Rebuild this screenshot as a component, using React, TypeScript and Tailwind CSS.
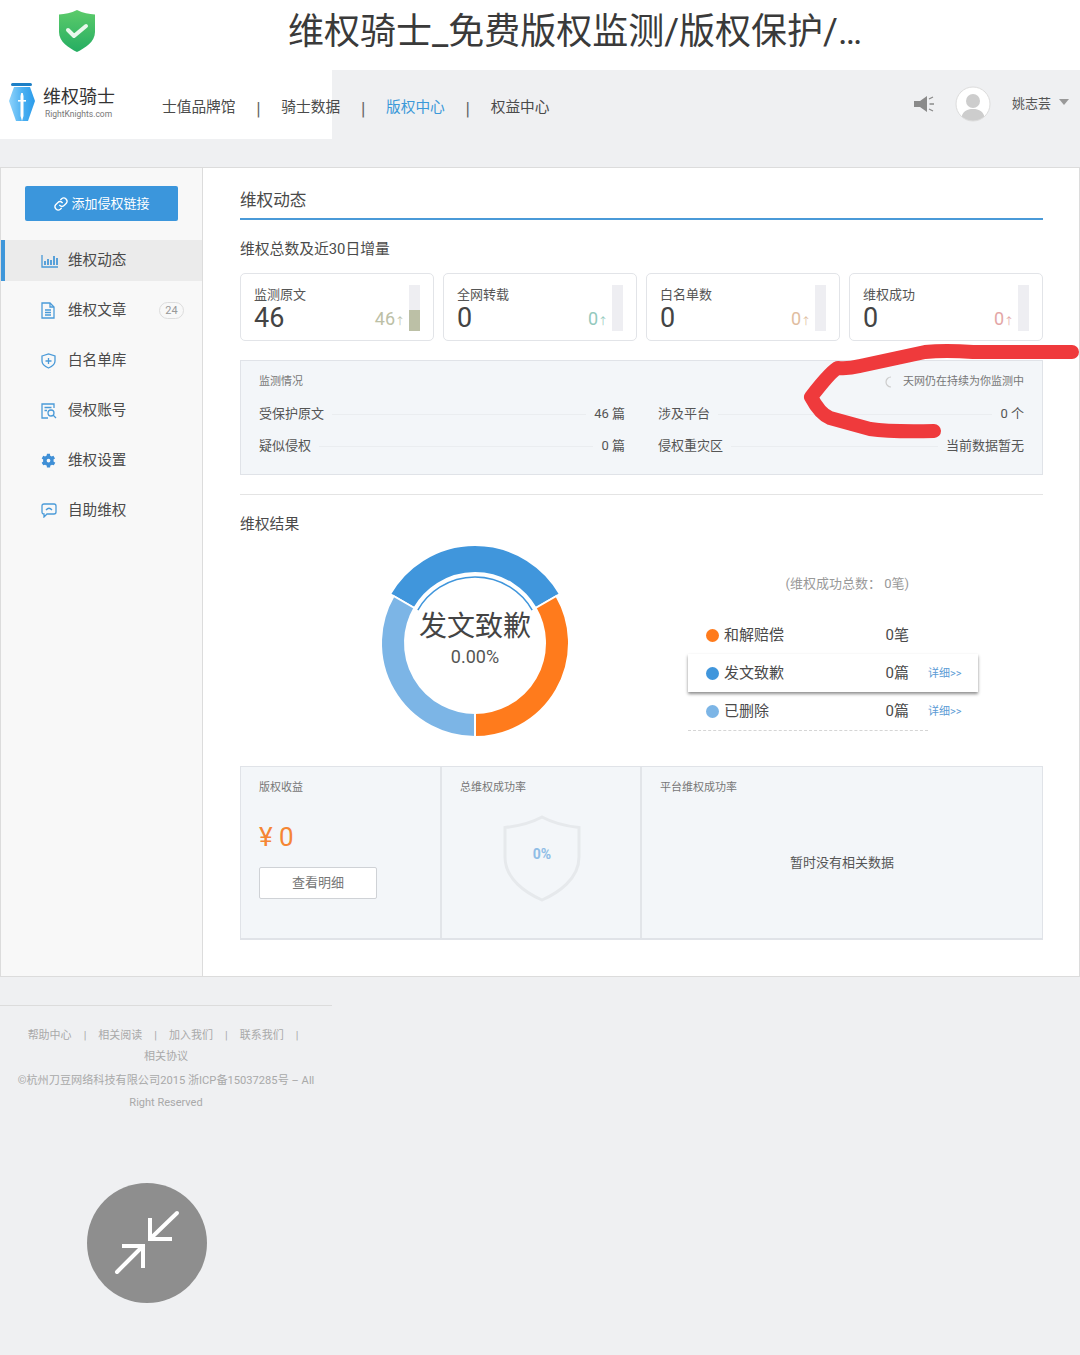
import React from "react";

const FONT = "font-['Roboto','Noto_Sans_CJK_SC',sans-serif]";

const NavSep = () => <span className="mx-[20.75px] mt-[3px] text-[18px] leading-[20px] text-[#666]">|</span>;

function Logo() {
  return (
    <svg width="28" height="40" viewBox="0 0 28 40" className="shrink-0">
      <defs>
        <linearGradient id="nib" x1="0" y1="0" x2="1" y2="0">
          <stop offset="0" stopColor="#8fd3fb" />
          <stop offset="0.5" stopColor="#4db1f2" />
          <stop offset="1" stopColor="#2a9bea" />
        </linearGradient>
      </defs>
      <rect x="3" y="0" width="21" height="3" rx="1.5" fill="#1c7fc6" />
      <path d="M6 4 H22 L27 18 L20 38 H8 L1 18 Z" fill="url(#nib)" />
      <path d="M13.2 10 h1.6 l.7 3 v20 l-1.5 5 l-1.5 -5 V13 Z" fill="#fff" />
      <rect x="10" y="17" width="8" height="1.6" fill="#fff" />
    </svg>
  );
}

function Card({ title, value, delta, color, fill }: { title: string; value: string; delta: string; color: string; fill?: number }) {
  return (
    <div className="relative flex-1 h-[68px] rounded-[5px] border border-[#e2e4e8] bg-white pl-[13px] pt-[12px]">
      <div className="text-[13px] leading-[17px] text-[#555]">{title}</div>
      <div className="text-[27px] leading-[30px] text-[#444]">{value}</div>
      <div className="absolute right-[13px] top-[11px] w-[11px] h-[46px] bg-[#eeeef2] flex flex-col justify-end">
        {fill ? <div className="w-full" style={{ height: fill, backgroundColor: color }} /> : null}
      </div>
      <div className="absolute right-[28px] bottom-[7px] text-[18px] leading-[22px]" style={{ color }}>
        {delta}
        <span className="text-[10px]">↑</span>
      </div>
    </div>
  );
}

function InfoRow({ label, value }: { label: string; value: string }) {
  return (
    <div className="flex items-center h-[32px] text-[13px] text-[#555]">
      <span>{label}</span>
      <span className="flex-1 mx-[8px] h-px bg-[#eaedf0]" />
      <span>{value}</span>
    </div>
  );
}

function SideItem({ icon, label, active, badge }: { icon: React.ReactNode; label: string; active?: boolean; badge?: string }) {
  return (
    <div className={`relative flex items-center h-[41px] pl-[40px] text-[14.6px] text-[#4a4a4a] ${active ? "bg-[#ebebeb] border-l-[4px] border-[#3f97da] !pl-[36px]" : ""}`}>
      <span className="w-[18px] h-[18px] mr-[9px] flex items-center justify-start">{icon}</span>
      <span>{label}</span>
      {badge ? (
        <span className="absolute left-[158px] top-[12px] w-[25px] h-[17px] rounded-full border border-[#ddd] text-[11px] leading-[15px] text-center text-[#999]">
          {badge}
        </span>
      ) : null}
    </div>
  );
}

const stroke = { fill: "none", stroke: "#4a9ad8", strokeWidth: 1.3 };

function IconChart() {
  return (
    <svg width="18" height="14" viewBox="0 0 18 14">
      <path d="M1 1 V13 H17" {...stroke} />
      <path d="M4 11 V7 M7 11 V5 M10 11 V6 M13 11 V2 M16 11 V4" fill="none" stroke="#4a9ad8" strokeWidth="1.8" />
    </svg>
  );
}
function IconDoc() {
  return (
    <svg width="14" height="17" viewBox="0 0 14 17">
      <path d="M1 1 H9 L13 5 V16 H1 Z" {...stroke} />
      <path d="M9 1 V5 H13 M4 8 H10 M4 10.5 H10 M4 13 H10" {...stroke} />
    </svg>
  );
}
function IconShield() {
  return (
    <svg width="15" height="16" viewBox="0 0 15 16">
      <path d="M1 3 L7.5 1 L14 3 V8 C14 12 10 14 7.5 15 C5 14 1 12 1 8 Z" {...stroke} />
      <path d="M7.5 5 V11 M4.5 8 H10.5" {...stroke} />
    </svg>
  );
}
function IconAccount() {
  return (
    <svg width="16" height="16" viewBox="0 0 16 16">
      <path d="M13 5 V1 H1 V15 H7" {...stroke} />
      <path d="M3.5 4.5 H10.5 M3.5 7.5 H6" {...stroke} />
      <circle cx="10" cy="10" r="3" {...stroke} />
      <path d="M12 12 L15 15" {...stroke} />
    </svg>
  );
}
function IconGear() {
  return (
    <svg width="15" height="15" viewBox="0 0 24 24">
      <path
        fill="#3f8fd6"
        d="M20 13.5a8 8 0 0 0 0-3l2.4-1.9-2.5-4.3-2.9 1.1a8 8 0 0 0-2.6-1.5L14.5 1h-5l-.4 2.9a8 8 0 0 0-2.6 1.5L3.6 4.3 1.1 8.6 3.5 10.5a8 8 0 0 0 0 3L1.1 15.4l2.5 4.3 2.9-1.1a8 8 0 0 0 2.6 1.5l.4 2.9h5l.4-2.9a8 8 0 0 0 2.6-1.5l2.9 1.1 2.5-4.3ZM12 15a3 3 0 1 1 0-6 3 3 0 0 1 0 6Z"
      />
    </svg>
  );
}
function IconChat() {
  return (
    <svg width="16" height="15" viewBox="0 0 16 15">
      <path d="M3 1 H13 Q15 1 15 3 V9 Q15 11 13 11 H6 L3 14 V11 Q1 11 1 9 V3 Q1 1 3 1 Z" {...stroke} />
      <path d="M5 7 Q8 3.5 11 7" {...stroke} />
    </svg>
  );
}

function polar(cx: number, cy: number, r: number, deg: number) {
  const a = ((deg - 90) * Math.PI) / 180;
  return [cx + r * Math.cos(a), cy + r * Math.sin(a)];
}
function arcPath(r0: number, r1: number, a0: number, a1: number) {
  const c = 100;
  const [x0, y0] = polar(c, c, r1, a0);
  const [x1, y1] = polar(c, c, r1, a1);
  const [x2, y2] = polar(c, c, r0, a1);
  const [x3, y3] = polar(c, c, r0, a0);
  return `M${x0} ${y0} A${r1} ${r1} 0 0 1 ${x1} ${y1} L${x2} ${y2} A${r0} ${r0} 0 0 0 ${x3} ${y3} Z`;
}

function Donut() {
  const [tx0, ty0] = polar(100, 100, 66, -60);
  const [tx1, ty1] = polar(100, 100, 66, 60);
  return (
    <div className="relative w-[200px] h-[200px]">
      <svg width="200" height="200" viewBox="0 0 200 200">
        <path d={arcPath(70, 98, -60, 60)} fill="#4096dc" stroke="#fff" strokeWidth="2" />
        <path d={arcPath(70, 94, 60, 180)} fill="#ff7b1c" stroke="#fff" strokeWidth="2" />
        <path d={arcPath(70, 94, 180, 300)} fill="#7cb5e6" stroke="#fff" strokeWidth="2" />
        <path d={`M${tx0} ${ty0} A66 66 0 0 1 ${tx1} ${ty1}`} fill="none" stroke="#4096dc" strokeWidth="1.5" />
      </svg>
      <div className="absolute left-0 right-0 top-[64px] text-center text-[28px] leading-[40px] text-[#444]">发文致歉</div>
      <div className="absolute left-0 right-0 top-[102px] text-center text-[18px] leading-[24px] text-[#555]">0.00%</div>
    </div>
  );
}

function LegendRow({ color, label, value, detail, raised }: { color: string; label: string; value: string; detail?: boolean; raised?: boolean }) {
  return (
    <div className={`flex items-center h-[38px] w-[290px] pl-[18px] text-[15px] text-[#4a4a4a] ${raised ? "bg-white shadow-[0_2px_3px_rgba(0,0,0,0.45)]" : ""}`}>
      <span className="w-[13px] h-[13px] rounded-full mr-[5px]" style={{ backgroundColor: color }} />
      <span>{label}</span>
      <span className="ml-auto mr-[19px]">{value}</span>
      <span className="w-[50px] mt-[3px] text-[11px] text-[#5b9bd5]">{detail ? "详细>>" : ""}</span>
    </div>
  );
}

export default function App() {
  return (
    <div className={`relative w-[1080px] h-[1355px] overflow-hidden bg-[#eff0f2] ${FONT}`}>
      {/* phone title bar */}
      <div className="flex items-center h-[70px] bg-white">
        <svg width="40" height="44" viewBox="0 0 40 44" className="ml-[57px] mt-[-8px] shrink-0">
          <defs>
            <linearGradient id="sh" x1="0" y1="0" x2="0" y2="1">
              <stop offset="0" stopColor="#5ccb6a" />
              <stop offset="1" stopColor="#25ad62" />
            </linearGradient>
          </defs>
          <path d="M20 1 C26 4 32 5 38 5.5 V23 C38 33 28 39 20 43 C12 39 2 33 2 23 V5.5 C8 5 14 4 20 1 Z" fill="url(#sh)" />
          <path d="M11 21 L17 27 L29 17" fill="none" stroke="#e9f8ec" strokeWidth="4" strokeLinecap="round" strokeLinejoin="round" />
        </svg>
        <div className="ml-[191px] mt-[-6px] text-[36px] leading-[48px] text-[#3a3a3a] whitespace-nowrap">维权骑士_免费版权监测/版权保护/…</div>
      </div>

      {/* nav */}
      <div className="relative flex items-center h-[69px]">
        <div className="absolute left-0 top-0 w-[332px] h-full bg-white" />
        <div className="relative flex items-center pl-[8px] mt-[13px] w-[162px] self-start">
          <Logo />
          <div className="ml-[7px] mt-[-1px]">
            <div className="text-[18px] leading-[24px] text-[#333]">维权骑士</div>
            <div className="text-[8.5px] leading-[11px] text-[#777] ml-[2px]">RightKnights.com</div>
          </div>
        </div>
        <div className="relative flex items-center mt-[6px] text-[14.7px] text-[#4a4a4a] whitespace-nowrap">
          <span>士值品牌馆</span>
          <NavSep />
          <span>骑士数据</span>
          <NavSep />
          <span className="text-[#3b99d9]">版权中心</span>
          <NavSep />
          <span>权益中心</span>
        </div>
        <div className="relative ml-auto flex items-center mt-[-2px] pr-[11px]">
          <svg width="22" height="18" viewBox="0 0 22 18">
            <path d="M1 6 H7 L14 1 V17 L7 12 H1 Z" fill="#8a8a8a" />
            <path d="M16 4 L20 2 M16.5 9 H21 M16 14 L20 16" stroke="#8a8a8a" strokeWidth="1.3" fill="none" />
          </svg>
          <svg width="36" height="36" viewBox="0 0 36 36" className="ml-[20px]">
            <clipPath id="av"><circle cx="18" cy="18" r="17" /></clipPath>
            <circle cx="18" cy="18" r="17" fill="#fff" />
            <g clipPath="url(#av)" fill="#cdcdcd">
              <circle cx="18" cy="15" r="7" />
              <path d="M6 36 C6 25 12 23 18 23 C24 23 30 25 30 36 Z" />
            </g>
            <circle cx="18" cy="18" r="17" fill="none" stroke="#dcdcdc" />
          </svg>
          <span className="ml-[21px] mt-[1px] text-[13px] text-[#555]">姚志芸</span>
          <span className="ml-[8px] mt-[-3px] w-0 h-0 border-l-[5.5px] border-r-[5.5px] border-t-[6px] border-l-transparent border-r-transparent border-t-[#999]" />
        </div>
      </div>

      {/* main panel */}
      <div className="flex mt-[28px] h-[810px] border border-[#dcdcdc] bg-white">
        <aside className="w-[202px] shrink-0 bg-[#f8f8f8] border-r border-[#dcdcdc] pt-[18px]">
          <div className="ml-[24px] w-[153px] h-[35px] rounded-[2px] bg-[#3b96dc] flex items-center justify-center pt-[1px] text-[13px] text-white">
            <svg width="16" height="16" viewBox="0 0 24 24" fill="none" stroke="#fff" strokeWidth="2" strokeLinecap="round" className="mr-[2px]">
              <path d="M10 14a5 5 0 0 0 7 0l3-3a5 5 0 0 0-7-7l-1.5 1.5" />
              <path d="M14 10a5 5 0 0 0-7 0l-3 3a5 5 0 0 0 7 7l1.5-1.5" />
            </svg>
            添加侵权链接
          </div>
          <div className="mt-[19px] flex flex-col gap-[9px]">
            <SideItem active icon={<IconChart />} label="维权动态" />
            <SideItem icon={<IconDoc />} label="维权文章" badge="24" />
            <SideItem icon={<IconShield />} label="白名单库" />
            <SideItem icon={<IconAccount />} label="侵权账号" />
            <SideItem icon={<IconGear />} label="维权设置" />
            <SideItem icon={<IconChat />} label="自助维权" />
          </div>
        </aside>

        <main className="flex-1 pl-[37px] pr-[36px] pt-[18px]">
          <div className="h-[34px] border-b-2 border-[#4a9ad8] text-[16.6px] leading-[29px] text-[#4a4a4a]">维权动态</div>
          <div className="mt-[18px] text-[14.8px] leading-[22px] text-[#4a4a4a]">维权总数及近30日增量</div>
          <div className="mt-[13px] flex gap-[9px]">
            <Card title="监测原文" value="46" delta="46" color="#bcc0a6" fill={21} />
            <Card title="全网转载" value="0" delta="0" color="#93c9bd" />
            <Card title="白名单数" value="0" delta="0" color="#e0bda0" />
            <Card title="维权成功" value="0" delta="0" color="#e3a6a6" />
          </div>

          <div className="mt-[19px] h-[115px] border border-[#e0e3e8] bg-[#f3f6f9] px-[18px] pt-[12px]">
            <div className="flex justify-between items-center h-[18px] text-[11px] text-[#777]">
              <span>监测情况</span>
              <span className="flex items-center">
                <svg width="10" height="12" viewBox="0 0 10 12" className="mr-[9px]">
                  <path d="M7 1 A5 5 0 0 0 7 11" fill="none" stroke="#ccc" strokeWidth="1.2" />
                </svg>
                天网仍在持续为你监测中
              </span>
            </div>
            <div className="mt-[7px] grid grid-cols-2 gap-x-[33px]">
              <div>
                <InfoRow label="受保护原文" value="46 篇" />
                <InfoRow label="疑似侵权" value="0 篇" />
              </div>
              <div>
                <InfoRow label="涉及平台" value="0 个" />
                <InfoRow label="侵权重灾区" value="当前数据暂无" />
              </div>
            </div>
          </div>

          <div className="mt-[19px] h-px bg-[#e4e4e4]" />
          <div className="mt-[18px] text-[14.8px] leading-[22px] text-[#4a4a4a]">维权结果</div>

          <div className="relative h-[231px]">
            <div className="absolute left-[135px] top-[8px] pointer-events-none"><Donut /></div>
            <div className="ml-[448px] flex flex-col">
              <div className="mt-[39px] w-[221px] text-right text-[13px] leading-[20px] text-[#999]">(维权成功总数： 0笔)</div>
              <div className="mt-[22px]">
                <LegendRow color="#ff7b1c" label="和解赔偿" value="0笔" />
                <LegendRow raised color="#4096dc" label="发文致歉" value="0篇" detail />
                <LegendRow color="#7cb5e6" label="已删除" value="0篇" detail />
              </div>
              <div className="w-[240px] border-t border-dashed border-[#d5d5d5]" />
            </div>
          </div>

          <div className="flex h-[174px] border border-[#e0e3e8] border-b-2 bg-[#f3f6f9] text-[11px] text-[#777]">
            <div className="w-[201px] border-r-2 border-[#e2e5e9] pl-[18px] pt-[13px]">
              <div>版权收益</div>
              <div className="mt-[22px] text-[26px] leading-[36px] text-[#f58634]">¥ 0</div>
              <div className="mt-[12px] w-[118px] h-[32px] rounded-[2px] border border-[#cfd2d6] bg-white text-center text-[13px] leading-[30px] text-[#777]">查看明细</div>
            </div>
            <div className="w-[200px] border-r-2 border-[#e2e5e9] pl-[18px] pt-[13px]">
              <div>总维权成功率</div>
              <div className="relative mt-[18px] ml-[43px] w-[78px] h-[87px]">
                <svg width="78" height="87" viewBox="0 0 78 87" className="absolute inset-0">
                  <path d="M39 2 C50 8 62 11 76 12.5 V42 C76 64 55 78 39 85 C23 78 2 64 2 42 V12.5 C16 11 28 8 39 2 Z" fill="none" stroke="#e6e9ec" strokeWidth="3" />
                </svg>
                <div className="absolute left-0 right-0 top-[29px] text-center text-[14px] leading-[20px] font-bold text-[#8fbde6]">0%</div>
              </div>
            </div>
            <div className="flex-1 pt-[13px]">
              <div className="pl-[18px]">平台维权成功率</div>
              <div className="mt-[56px] text-center text-[13px] leading-[20px] text-[#555]">暂时没有相关数据</div>
            </div>
          </div>
        </main>
      </div>

      {/* footer */}
      <div className="mt-[28px] w-[332px] border-t border-[#dcdcdc] pt-[18px] text-center text-[11px] leading-[22.6px] text-[#a9a9a9]">
        <div className="flex justify-center gap-[12px] pr-[6px] pt-[1px] h-[22px] whitespace-nowrap">
          <span>帮助中心</span><span>|</span><span>相关阅读</span><span>|</span><span>加入我们</span><span>|</span><span>联系我们</span><span>|</span>
        </div>
        <div>相关协议</div>
        <div className="whitespace-nowrap text-[11.15px] mt-[1px]">©杭州刀豆网络科技有限公司2015 浙ICP备15037285号 – All</div>
        <div>Right Reserved</div>
      </div>

      {/* floating collapse button */}
      <div className="absolute left-[87px] top-[1183px] w-[120px] h-[120px] rounded-full bg-[#8e8e8e]">
        <svg width="120" height="120" viewBox="0 0 120 120">
          <g fill="none" stroke="#fff" strokeWidth="4" strokeLinecap="round">
            <path d="M90 30 L63 56" />
            <path d="M63 35 V56 H85" strokeLinecap="butt" />
            <path d="M30 89 L56 63" />
            <path d="M35 63 H56 V85" strokeLinecap="butt" />
          </g>
        </svg>
      </div>

      {/* hand-drawn red annotation */}
      <svg className="absolute left-0 top-0 pointer-events-none" width="1080" height="1355" viewBox="0 0 1080 1355">
        <path d="M1072 352 H973 Q945 350 925 352 L860 366 Q848 369 838 368 Q832 370 811 397 Q820 414 830 418 L870 429 Q890 432 934 431" fill="none" stroke="#ef3a3c" strokeWidth="14" strokeLinecap="round" strokeLinejoin="round" />
      </svg>
    </div>
  );
}
